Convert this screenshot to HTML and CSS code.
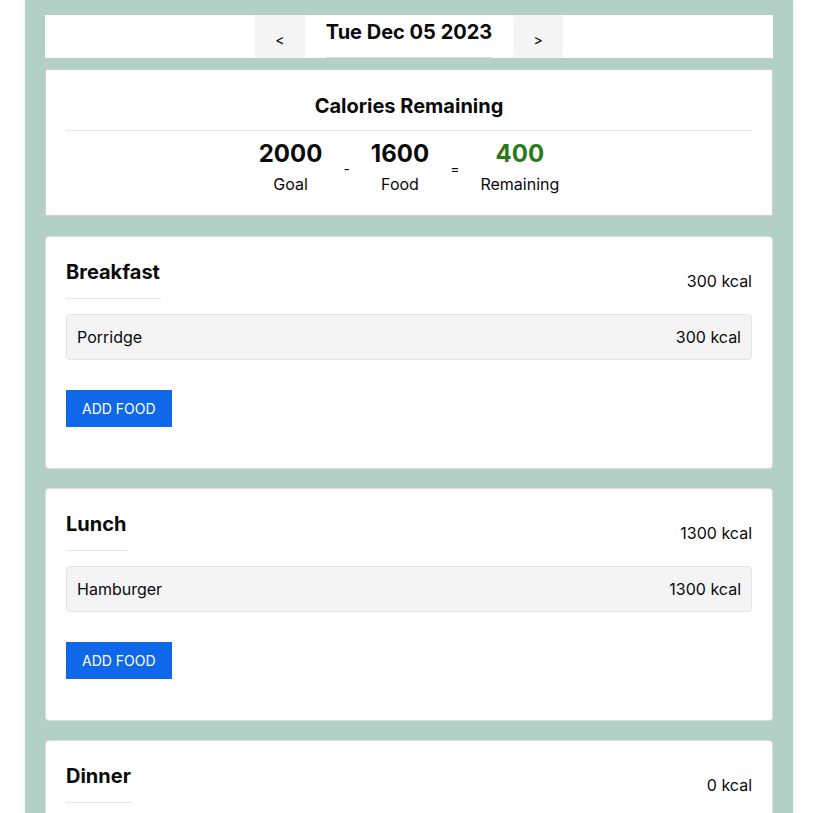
FILE: index.html
```html
<!DOCTYPE html>
<html lang="en">
<head>
<meta charset="utf-8">
<title>Calorie Tracker</title>
<link rel="stylesheet" href="styles.css">
</head>
<body>
<main class="app">
  <header class="date-bar">
    <button class="nav-btn nav-prev">&lt;</button>
    <div class="date-wrap"><h1 class="date-title">Tue Dec 05 2023</h1></div>
    <button class="nav-btn nav-next">&gt;</button>
  </header>

  <section class="summary">
    <h2 class="summary-title">Calories Remaining</h2>
    <div class="stats">
      <div class="stat"><div class="stat-num">2000</div><div class="stat-label">Goal</div></div>
      <div class="op">-</div>
      <div class="stat"><div class="stat-num">1600</div><div class="stat-label">Food</div></div>
      <div class="op">=</div>
      <div class="stat"><div class="stat-num stat-good">400</div><div class="stat-label">Remaining</div></div>
    </div>
  </section>

  <section class="meal">
    <div class="meal-head">
      <h3 class="meal-title">Breakfast</h3>
      <span class="meal-kcal">300 kcal</span>
    </div>
    <div class="food-row"><span>Porridge</span><span>300 kcal</span></div>
    <button class="add-btn">ADD FOOD</button>
  </section>

  <section class="meal">
    <div class="meal-head">
      <h3 class="meal-title">Lunch</h3>
      <span class="meal-kcal">1300 kcal</span>
    </div>
    <div class="food-row"><span>Hamburger</span><span>1300 kcal</span></div>
    <button class="add-btn">ADD FOOD</button>
  </section>

  <section class="meal">
    <div class="meal-head">
      <h3 class="meal-title">Dinner</h3>
      <span class="meal-kcal">0 kcal</span>
    </div>
    <button class="add-btn">ADD FOOD</button>
  </section>
</main>
</body>
</html>
```
FILE: styles.css
```css
* { box-sizing: border-box; }
html, body { margin: 0; padding: 0; background: #fff; }
body {
  font-family: Inter, "Noto Sans", "Liberation Sans", sans-serif;
  color: #0a0a0a;
  font-size: 16px;
}
.app {
  width: 768px;
  margin-left: 25px;
  background: #b3d0c6;
  padding: 15px 20px 20px;
  min-height: 900px;
  box-shadow: 0 0 8px rgba(0,0,0,0.06);
}
.date-bar {
  display: flex;
  justify-content: center;
  background: #fff;
  height: 43px;
}
.nav-btn {
  width: 50px;
  border: none;
  background: #f4f4f4;
  font-family: inherit;
  font-size: 14px;
  color: #0a0a0a;
  padding: 6px 0 0;
  cursor: pointer;
}
.date-wrap { padding: 5px 21px 0 21px; }
.date-title {
  margin: 0;
  font-size: 20px;
  line-height: 24px;
  font-weight: 700;
  padding-bottom: 13px;
  border-bottom: 1px solid #dddddd;
}
.summary {
  margin-top: 11px;
  background: #fff;
  border: 1px solid #cfcfcf;
  padding: 21px 20px 21px;
}
.summary-title {
  margin: 0;
  text-align: center;
  font-size: 20px;
  line-height: 30px;
  font-weight: 700;
  padding-bottom: 9px;
  border-bottom: 1px solid #e4e4e4;
}
.stats {
  display: flex;
  justify-content: center;
  align-items: center;
  gap: 21px;
  padding-top: 5px;
}
.stat { text-align: center; }
.stat-num {
  font-size: 24px;
  line-height: 36px;
  font-weight: 700;
}
.stat-good { color: #287a1a; }
.stat-label {
  font-size: 16px;
  line-height: 20px;
  margin-top: 2px;
}
.op { font-size: 14px; padding-top: 6px; }
.meal {
  margin-top: 20px;
  background: #fff;
  border: 1px solid #dcdcdc;
  border-radius: 4px;
  padding: 23px 20px 21px;
}
.meal + .meal { margin-top: 19px; }
.meal-head {
  display: flex;
  justify-content: space-between;
  align-items: center;
}
.meal-title {
  margin: 0;
  font-size: 20px;
  line-height: 24px;
  font-weight: 700;
  padding-bottom: 14px;
  border-bottom: 1px solid #e4e4e4;
  padding-right: 1px;
}
.meal-kcal { font-size: 16px; padding-top: 3px; }
.food-row {
  margin-top: 15px;
  display: flex;
  justify-content: space-between;
  background: #f4f4f4;
  border: 1px solid #e4e4e4;
  border-radius: 4px;
  padding: 13px 10px 12px;
  line-height: 19px;
}
.add-btn {
  display: block;
  margin: 30px 0 20px;
  background: #0f67ea;
  color: #fff;
  border: none;
  font-family: inherit;
  font-size: 14px;
  line-height: 18px;
  padding: 10px 16px 9px;
  cursor: pointer;
}
```
